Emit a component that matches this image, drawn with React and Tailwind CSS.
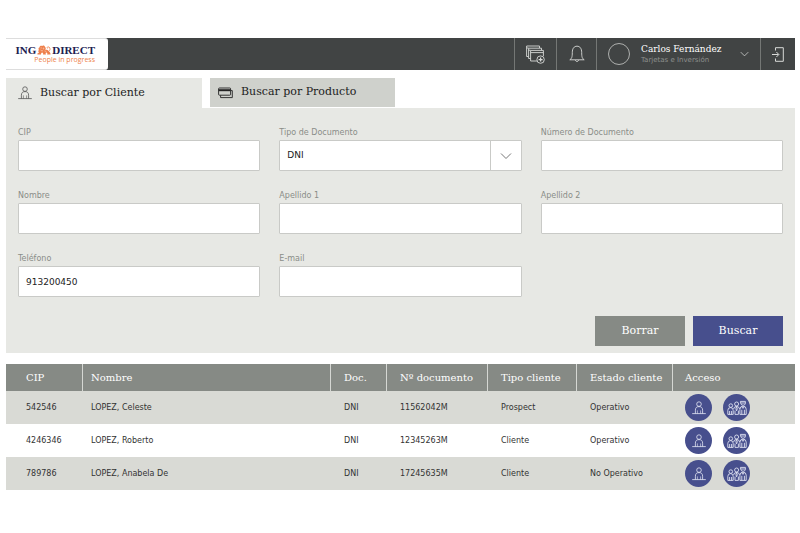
import React from "react";

const serif = "font-['DejaVu_Serif',serif]";

function PersonIcon({ className }) {
  return (
    <svg viewBox="0 0 14 14" className={className} fill="none" stroke="currentColor" strokeWidth="0.8" aria-hidden="true">
      <circle cx="7" cy="3.1" r="2.3" />
      <path d="M3.4 12.6V9.2C3.4 6.8 4.6 5.6 7 5.6S10.6 6.8 10.6 9.2V12.6" />
      <path d="M5.4 12.6V9.4M8.6 12.6V9.4" strokeWidth="0.6" />
      <path d="M0.2 12.6H13.8" />
    </svg>
  );
}

function GroupIcon({ className }) {
  return (
    <svg viewBox="0 0 20 16" className={className} fill="none" stroke="currentColor" strokeWidth="0.85" aria-hidden="true">
      <circle cx="3.8" cy="5.6" r="1.8" />
      <circle cx="9.6" cy="4" r="2" />
      <path d="M13.4 1.4H18.4V3.6A2.4 2.4 0 0 1 13.8 3.6ZM13.8 3H18.2" />
      <path d="M0.8 14.4V10.4Q0.8 7.6 3.6 7.6Q6.2 7.6 6.2 10.4V14.4M2.6 14.4V11M4.6 14.4V11" />
      <path d="M6.6 9Q7 6.4 9.6 6.4Q12.2 6.4 12.6 9M9.6 6.6L8.9 8.8L9.6 10.8L10.3 8.8ZM8 14.4V10.6M11.4 14.4V10.6" />
      <path d="M12.9 14.4V9.2Q13 6.2 16 6.2Q19.2 6.2 19.2 9.2V14.4M14.8 14.4V9.8M17.4 14.4V9.8M14.6 6.4L16 8.4L17.4 6.4" />
      <path d="M0.8 14.4H6.2M8 14.4H11.4M12.9 14.4H19.2" />
    </svg>
  );
}

function ChevronIcon({ className }) {
  return (
    <svg viewBox="0 0 12 8" className={className} fill="none" stroke="currentColor" aria-hidden="true">
      <path d="M1 1.5L6 6.5L11 1.5" />
    </svg>
  );
}

function LionIcon() {
  return (
    <svg viewBox="0 0 28 20" className="h-[10px] w-[14px]" fill="#ee7f4b" aria-hidden="true">
      <path d="M5 19H1C0 17 2 16 4 15C2 13 2 11 4 10C2 8 3 5 5 5C5 2 8 1 10 2C12 0 16 1 16 4C18 5 18 8 16 10C19 9 23 10 24 13C26 14 27 16 27 19H20C22 17 20 15 18 15C17 16 17 17 18 19H12C13 17 12 15 10 15C8 16 8 18 8 19Z" />
      <path d="M23 13C27 11 27 6 24 4C21 3 19 5 21 7" fill="none" stroke="#ee7f4b" strokeWidth="1.6" />
      <path d="M7 6C8 5 9 5 10 7M12 5C14 6 14 8 12 9M7 10C9 12 11 12 12 11M15 12C17 12 18 13 19 14" fill="none" stroke="#fff" strokeWidth="0.9" />
    </svg>
  );
}

function WindowsIcon() {
  return (
    <svg viewBox="0 0 19 19" className="h-[19px] w-[19px]" fill="none" stroke="currentColor" strokeWidth="0.9" aria-hidden="true">
      <path d="M2.5 11.5H0.6V1H13.5V3M0.6 3H2.5" />
      <path d="M4.5 13.5H2.6V3.2H15.5V5.2M2.6 5.2H4.5" />
      <path d="M11 16H4.6V5.4H17.4V11M4.6 7.6H17.4" />
      <circle cx="14.6" cy="14.6" r="3.7" />
      <path d="M14.6 12.6V16.6M12.6 14.6H16.6" strokeWidth="1.2" />
    </svg>
  );
}

function BellIcon() {
  return (
    <svg viewBox="0 0 16 18" className="h-[18px] w-4" fill="none" stroke="currentColor" strokeWidth="0.9" aria-hidden="true">
      <path d="M0.8 14.8C2.8 13.6 3.3 12 3.3 7.5C3.3 3.6 5 1.2 8 1.2S12.7 3.6 12.7 7.5C12.7 12 13.2 13.6 15.2 14.8Z" />
      <path d="M6.4 15C6.6 17 9.4 17 9.6 15" />
    </svg>
  );
}

function ExitIcon() {
  return (
    <svg viewBox="0 0 12 15" className="h-[15px] w-3" fill="none" stroke="currentColor" strokeWidth="1" aria-hidden="true">
      <path d="M3.5 3.5V0.7H11.3V14.3H3.5V11.5" />
      <path d="M0 7.5H6.5M4.4 5L6.9 7.5L4.4 10" />
    </svg>
  );
}

function CardsIcon() {
  return (
    <svg viewBox="0 0 15 12" className="h-3 w-[15px]" fill="none" stroke="currentColor" strokeWidth="0.9" aria-hidden="true">
      <rect x="0.6" y="1" width="12" height="7.2" rx="0.8" />
      <path d="M0.6 3.2H12.6" strokeWidth="2" />
      <path d="M13 3.6H14.3V10.6H2.6V8.4" />
    </svg>
  );
}

const control =
  "h-[31px] w-full rounded-[1px] border border-[#c9cac7] bg-white px-[7px] text-[9px] text-[#222] outline-none";
const caption = "text-[8px] leading-[14px] text-[#8a8d88]";

function Field({ id, label, value = "" }) {
  return (
    <div className="flex flex-col">
      <label htmlFor={id} className={caption}>{label}</label>
      <input id={id} type="text" defaultValue={value} className={control} />
    </div>
  );
}

const headings = ["CIP", "Nombre", "Doc.", "Nº documento", "Tipo cliente", "Estado cliente"];
const rows = [
  ["542546", "LOPEZ, Celeste", "DNI", "11562042M", "Prospect", "Operativo"],
  ["4246346", "LOPEZ, Roberto", "DNI", "12345263M", "Cliente", "Operativo"],
  ["789786", "LOPEZ, Anabela De", "DNI", "17245635M", "Cliente", "No Operativo"],
];
const pads = ["pl-5", "pl-2", "pl-[13px]", "pl-[13px]", "pl-[13px]", "pl-[13px]"];

export default function App() {
  return (
    <div className="min-h-screen bg-white pt-[38px] pr-[5px] pl-[6px] font-['DejaVu_Sans',sans-serif]">
      <header className="flex h-8 items-stretch bg-[#414444] text-[#d8dad8]">
        <a href="#" aria-label="ING Direct" className="flex w-[102px] flex-col justify-center rounded-r-[3px] border-y border-[#ddd] bg-white pt-px pr-[13px]">
          <span className="flex items-center justify-end gap-px font-['Liberation_Serif',serif] text-[11px] leading-[10px] font-bold text-[#20204f]">
            ING
            <LionIcon />
            DIRECT
          </span>
          <span className="text-right font-['Open_Sans',sans-serif] text-[7px] leading-[9px] text-[#ee7f4b]">People in progress</span>
        </a>
        <div className="ml-auto flex">
          <button aria-label="Nueva ventana" className="flex w-[42px] items-center justify-center border-l border-[#747775]"><WindowsIcon /></button>
          <button aria-label="Avisos" className="flex w-10 items-center justify-center border-l border-[#747775]"><BellIcon /></button>
          <button className="flex w-[164px] items-center border-l border-[#747775] pl-[11px] text-left">
            <span className="h-[22px] w-[22px] rounded-full border border-[#aeb0ae]" />
            <span className="ml-[11px] flex flex-col">
              <span className={`${serif} text-[9px] leading-[11px] whitespace-nowrap text-white`}>Carlos Fernández</span>
              <span className="text-[7px] leading-[10px] text-[#8d908e]">Tarjetas e Inversión</span>
            </span>
            <ChevronIcon className="mr-[11px] ml-auto h-[6px] w-[9px]" />
          </button>
          <button aria-label="Salir" className="flex w-[35px] items-center justify-center border-l border-[#747775]"><ExitIcon /></button>
        </div>
      </header>

      <main>
        <nav className="mt-2 flex items-stretch gap-2">
          <button className={`${serif} flex h-[30px] w-[196px] items-center gap-2 bg-[#e7e8e4] pl-3 text-[11px] text-[#222]`}>
            <PersonIcon className="h-[14px] w-[14px] text-[#555]" />
            Buscar por Cliente
          </button>
          <button className={`${serif} flex h-[29px] w-[185px] items-center gap-2 bg-[#cfd1cc] pl-2 text-[11px] text-[#222]`}>
            <CardsIcon />
            Buscar por Producto
          </button>
        </nav>

        <form className="bg-[#e7e8e4] px-3 pt-[18px] pb-[7px]" onSubmit={(e) => e.preventDefault()}>
          <div className="grid grid-cols-3 gap-x-[19px] gap-y-[18px]">
            <Field id="cip" label="CIP" />
            <div className="flex flex-col">
              <label htmlFor="tipo" className={caption}>Tipo de Documento</label>
              <div className="relative">
                <select id="tipo" defaultValue="DNI" className={`${control} appearance-none`}>
                  <option>DNI</option>
                </select>
                <span className="pointer-events-none absolute inset-y-0 right-0 flex w-8 items-center justify-center border-l border-[#c9cac7] text-[#777]">
                  <ChevronIcon className="h-[8px] w-3" />
                </span>
              </div>
            </div>
            <Field id="numero" label="Número de Documento" />
            <Field id="nombre" label="Nombre" />
            <Field id="apellido1" label="Apellido 1" />
            <Field id="apellido2" label="Apellido 2" />
            <Field id="telefono" label="Teléfono" value="913200450" />
            <Field id="email" label="E-mail" />
          </div>
          <div className="mt-[19px] flex justify-end gap-2">
            <button type="reset" className={`${serif} h-[30px] w-[90px] bg-[#868a85] text-[11px] text-white`}>Borrar</button>
            <button type="submit" className={`${serif} h-[30px] w-[90px] bg-[#474f8d] text-[11px] text-white`}>Buscar</button>
          </div>
        </form>

        <table className="mt-[11px] w-full table-fixed border-separate border-spacing-0">
          <colgroup>
            <col className="w-[77px]" />
            <col />
            <col className="w-[56px]" />
            <col className="w-[101px]" />
            <col className="w-[89px]" />
            <col className="w-[96px]" />
            <col className="w-[122px]" />
          </colgroup>
          <thead>
            <tr className={`${serif} h-[27px] bg-[#868a85] text-left text-[10px] whitespace-nowrap text-white`}>
              {headings.map((h, i) => (
                <th key={h} className={`border-r border-[#d5d7d3] py-0 font-normal ${pads[i]}`}>{h}</th>
              ))}
              <th className="py-0 pl-3 font-normal">Acceso</th>
            </tr>
          </thead>
          <tbody>
            {rows.map((row) => (
              <tr key={row[0]} className="h-[33px] text-[8px] whitespace-nowrap text-[#333] odd:bg-[#d9dad5]">
                {row.map((cell, i) => (
                  <td key={i} className={`py-0 ${pads[i]}`}>{cell}</td>
                ))}
                <td className="py-0 pl-3">
                  <div className="flex gap-[11px] text-[#e6e8f5]">
                    <button aria-label="Ver cliente" className="flex h-[27px] w-[27px] items-center justify-center rounded-full bg-[#474f8d]">
                      <PersonIcon className="h-[14px] w-[14px]" />
                    </button>
                    <button aria-label="Ver grupo" className="flex h-[27px] w-[27px] items-center justify-center rounded-full bg-[#474f8d]">
                      <GroupIcon className="h-4 w-5" />
                    </button>
                  </div>
                </td>
              </tr>
            ))}
          </tbody>
        </table>
      </main>
    </div>
  );
}
